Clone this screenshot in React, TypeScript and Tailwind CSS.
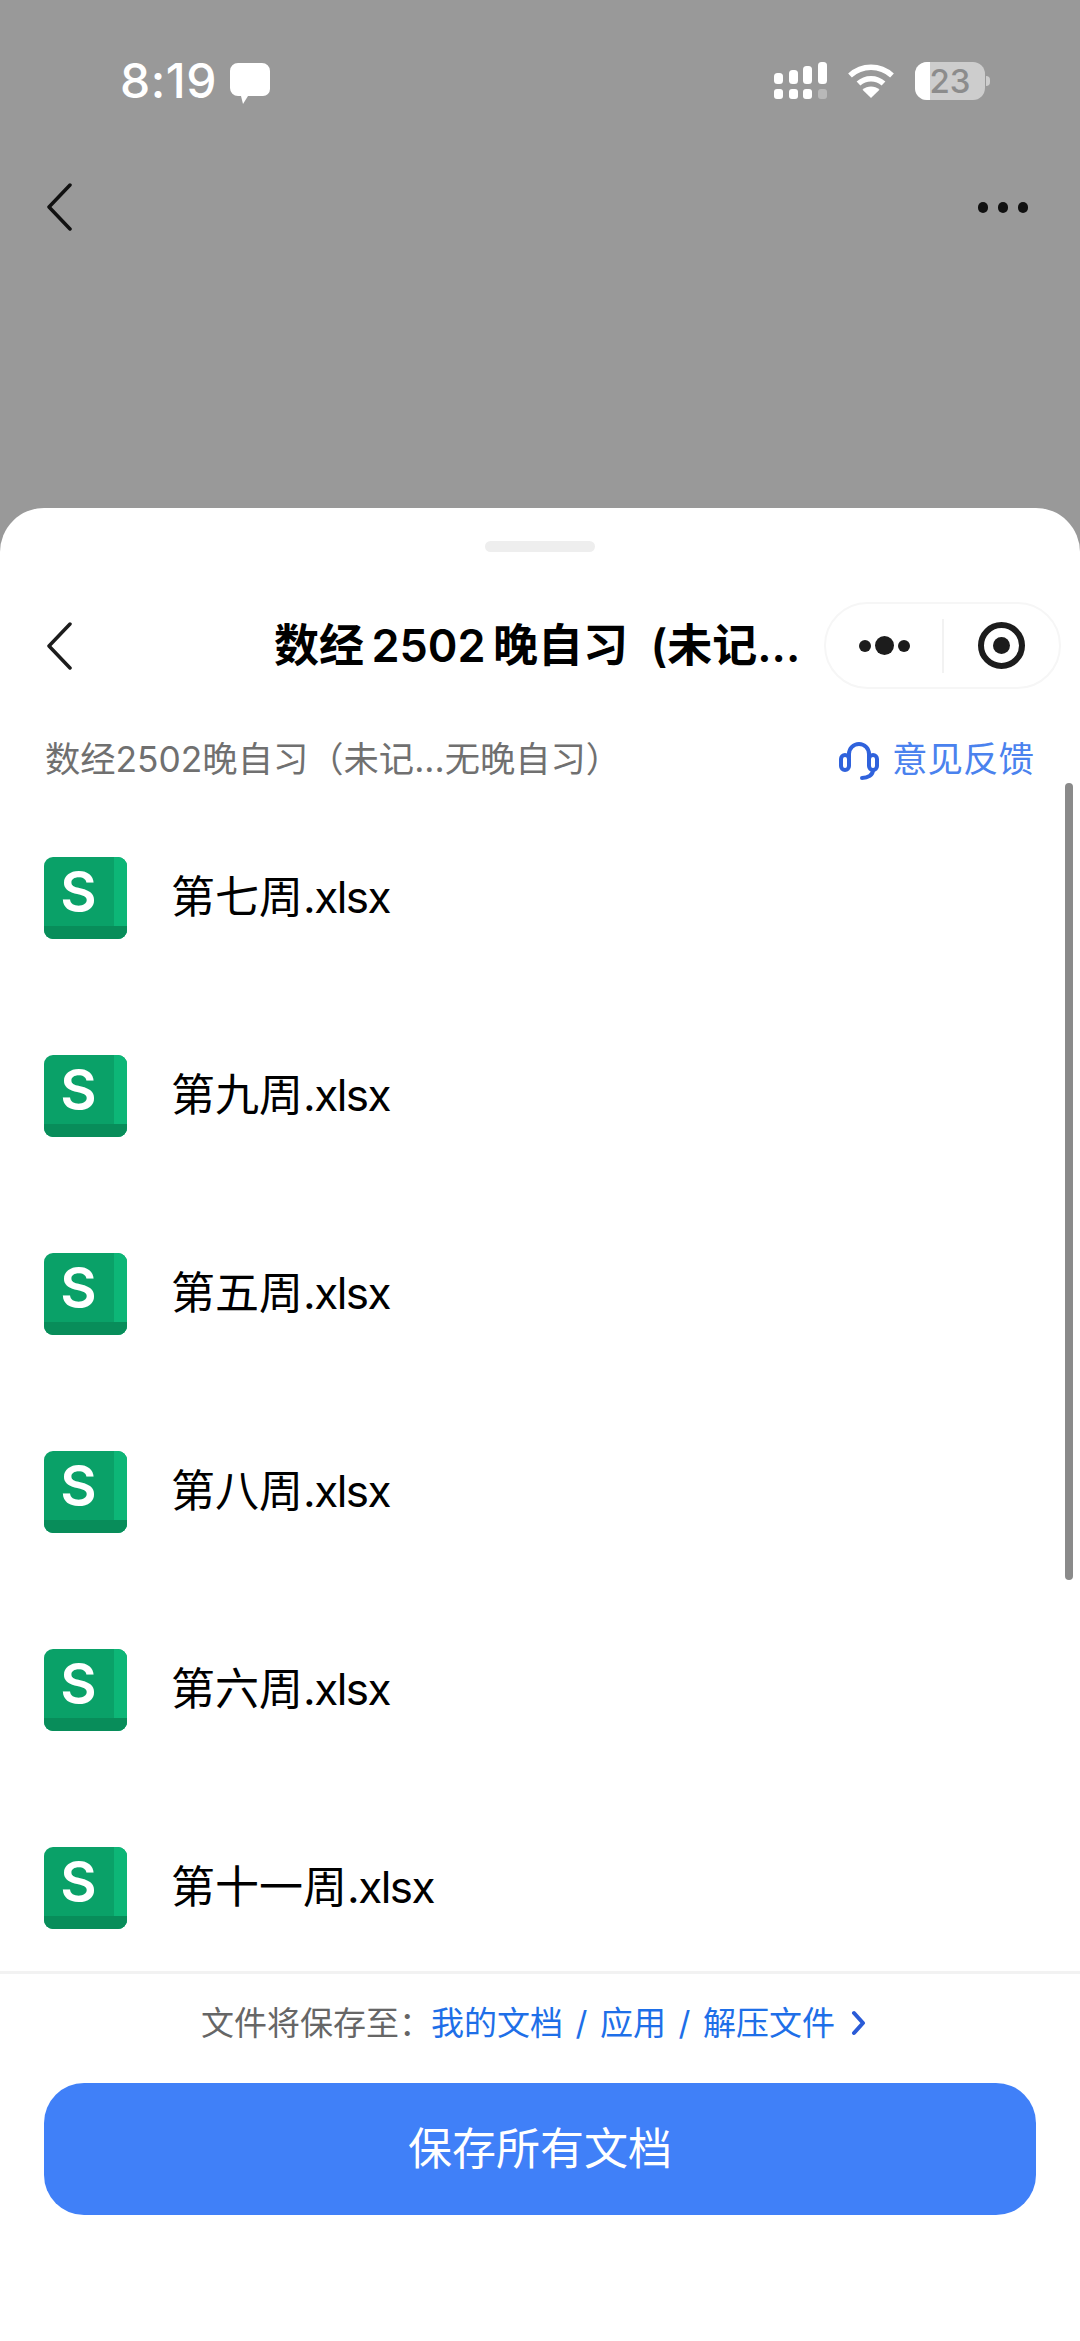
const files = ['第七周', '第九周', '第五周', '第八周', '第六周', '第十一周'];

const font = 'font-["Inter","Noto_Sans_CJK_SC",sans-serif] [text-spacing-trim:space-all]';

const StatusBar = () => (
  <div className="flex h-[60px] items-center pl-[120px] pr-[90px] text-white">
    <span className="text-[48px] font-medium leading-none tracking-[0.5px]">8:19</span>
    <svg className="ml-[12px] mt-[3px]" width="42" height="42" viewBox="0 0 42 42" fill="#fff">
      <path d="M9 1h24a8 8 0 0 1 8 8v18a7 7 0 0 1-7 7H19l-5 8-2-8H9a8 8 0 0 1-8-8V9a8 8 0 0 1 8-8z" />
    </svg>
    <svg className="ml-auto" width="56" height="38" viewBox="0 0 56 38" fill="#fff">
      <rect x="1" y="11" width="9" height="11" rx="3.5" />
      <rect x="16" y="8" width="9" height="14" rx="3.5" />
      <rect x="30" y="4" width="9" height="18" rx="3.5" />
      <rect x="45" y="0" width="9" height="22" rx="3.5" />
      <rect x="1" y="27" width="9" height="10" rx="3" />
      <rect x="16" y="27" width="9" height="10" rx="3" />
      <rect x="30" y="27" width="9" height="10" rx="3" />
      <rect x="45" y="27" width="9" height="10" rx="3" fill="#b8b8b8" />
    </svg>
    <svg className="ml-[18px]" width="48" height="36" viewBox="0 0 48 36" fill="none" stroke="#fff" strokeWidth="5.5">
      <path d="M3 12.5C15 1.5 33 1.5 45 12.5" />
      <path d="M11.5 20.5C18.5 14 29.5 14 36.5 20.5" />
      <path d="M24 35l-8.500-8.200C20.500 22.500 27.500 22.500 32.500 26.800z" fill="#fff" stroke="none" />
    </svg>
    <div className="relative ml-[20px] flex h-[38px] w-[70px] items-center justify-center rounded-[12px] bg-[#cdcdcd] text-[33px] font-medium leading-none text-[#8c8c8c]">
      <div className="absolute inset-y-0 left-0 w-[15px] rounded-l-[12px] bg-white" />
      <span className="relative">23</span>
    </div>
    <div className="ml-[1px] h-[10px] w-[4px] rounded-r-full bg-[#cdcdcd]" />
  </div>
);

const BackIcon = ({ color }: { color: string }) => (
  <svg width="27" height="48" viewBox="0 0 27 48" fill="none" stroke={color} strokeWidth="3.500" strokeLinecap="round" strokeLinejoin="round">
    <path d="M24 2L3 24l21 22" />
  </svg>
);

const SheetIcon = () => (
  <div className="relative h-[82px] w-[83px] shrink-0 overflow-hidden rounded-[9px] bg-[#0aa168]">
    <div className="absolute inset-y-0 right-0 w-[13px] bg-[#0db677]" />
    <div className="absolute inset-x-0 bottom-0 h-[13px] bg-[#088d5a]" />
    <span className="absolute left-0 top-[3px] w-[69px] text-center text-[56px] font-semibold leading-[64px] text-white">S</span>
  </div>
);

const Capsule = () => (
  <div className="mr-[19px] flex h-[87px] w-[237px] shrink-0 items-center rounded-full border-2 border-[#f6f6f6] bg-white">
    <div className="flex w-[116px] items-center justify-center gap-[4px]">
      <span className="h-[12px] w-[12px] rounded-full bg-[#1c1c1c]" />
      <span className="h-[19px] w-[19px] rounded-full bg-[#1c1c1c]" />
      <span className="h-[12px] w-[12px] rounded-full bg-[#1c1c1c]" />
    </div>
    <div className="h-[54px] w-[2px] bg-[#f2f2f2]" />
    <div className="flex flex-1 items-center justify-center">
      <div className="flex h-[47px] w-[47px] items-center justify-center rounded-full border-[6px] border-[#1c1c1c]">
        <span className="h-[17px] w-[17px] rounded-full bg-[#1c1c1c]" />
      </div>
    </div>
  </div>
);

export default function App() {
  return (
    <div className={`flex h-[2341px] w-[1080px] flex-col overflow-hidden bg-[#999999] ${font}`}>
      <div className="h-[508px] shrink-0 pt-[51px]">
        <StatusBar />
        <div className="mt-[72px] flex items-center justify-between pl-[46px] pr-[52px]">
          <BackIcon color="#111111" />
          <div className="flex gap-[10px]">
            <span className="h-[11px] w-[10px] rounded-full bg-[#111111]" />
            <span className="h-[11px] w-[10px] rounded-full bg-[#111111]" />
            <span className="h-[11px] w-[10px] rounded-full bg-[#111111]" />
          </div>
        </div>
      </div>

      <div className="flex min-h-0 flex-1 flex-col rounded-t-[44px] bg-white">
        <div className="mx-auto mt-[33px] h-[11px] w-[110px] rounded-full bg-[#eeeeee]" />

        <div className="mt-[50px] flex h-[87px] items-center pl-[46px]">
          <BackIcon color="#1c1c1c" />
          <div className="ml-[201px] w-[530px] whitespace-nowrap text-[45px] font-semibold leading-none text-black">
            数经&#8201;2502&#8201;晚自习&#8194;(未记...
          </div>
          <div className="ml-auto">
            <Capsule />
          </div>
        </div>

        <div className="mt-[41px] flex h-[60px] items-center justify-between pl-[45px] pr-[46px]">
          <span className="text-[35.3px] leading-none text-[#707070]">数经2502晚自习（未记...无晚自习）</span>
          <div className="flex items-center gap-[13px]">
            <svg width="40" height="40" viewBox="0 0 40 40" fill="none" stroke="#2f62dc" strokeWidth="4" strokeLinecap="round">
              <rect x="2" y="15" width="8" height="15" rx="4" />
              <rect x="30" y="15" width="8" height="15" rx="4" />
              <path d="M10 18v-4a10 10 0 0 1 20 0v4" />
              <path d="M34 30c0 5-5 8-11 8" />
            </svg>
            <span className="text-[35.500px] leading-none text-[#4a82ee]">意见反馈</span>
          </div>
        </div>

        <div className="relative min-h-0 flex-1">
          <div className="-mt-px h-full overflow-hidden pt-[10px]">
            {files.map((name) => (
              <div key={name} className="flex h-[198px] items-center pl-[44px]">
                <SheetIcon />
                <span className="ml-[44px] -translate-y-px text-[44px] leading-none text-black">
                  {name}
                  <span className="tracking-[-1.5px]">.xlsx</span>
                </span>
              </div>
            ))}
          </div>
          <div className="absolute -top-[7px] right-[7px] h-[797px] w-[8px] rounded-full bg-[#8a8a8a]" />
        </div>

        <div className="h-[370px] shrink-0 border-t-[3px] border-[#f2f2f2]">
          <div className="mt-[30px] flex h-[38px] items-center justify-center pr-[12px] text-[33px] leading-none">
            <span className="text-[#666666]">文件将保存至：</span>
            <span className="-ml-px flex text-[#1e6fe8]">
              我的文档
              <span className="w-[37px] text-center">/</span>
              应用
              <span className="w-[37px] text-center">/</span>
              解压文件
            </span>
            <svg className="ml-[16px]" width="16" height="26" viewBox="0 0 16 26" fill="none" stroke="#2a5bd7" strokeWidth="4" strokeLinecap="round" strokeLinejoin="round">
              <path d="M3 3l9 10-9 10" />
            </svg>
          </div>
          <div className="mx-[44px] mt-[41px] flex h-[132px] items-center justify-center rounded-[40px] bg-[#4080f8] text-[44px] leading-none text-white">
            保存所有文档
          </div>
        </div>
      </div>
    </div>
  );
}
